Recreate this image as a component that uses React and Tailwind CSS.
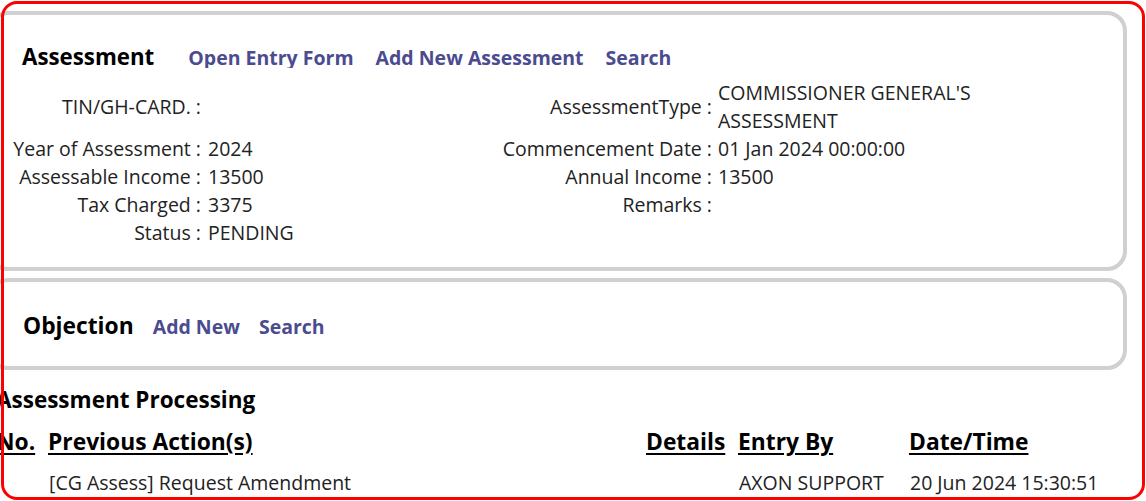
import React from 'react';

const LEFT_ROWS = [
  { label: 'TIN/GH-CARD. :', value: '' },
  { label: 'Year of Assessment :', value: '2024' },
  { label: 'Assessable Income :', value: '13500' },
  { label: 'Tax Charged :', value: '3375' },
  { label: 'Status :', value: 'PENDING' },
];

const RIGHT_ROWS = [
  { label: 'AssessmentType :', value: "COMMISSIONER GENERAL'S ASSESSMENT" },
  { label: 'Commencement Date :', value: '01 Jan 2024 00:00:00' },
  { label: 'Annual Income :', value: '13500' },
  { label: 'Remarks :', value: '' },
  { label: '', value: '' },
];

function NavLink({ clip, children }) {
  return (
    <span
      className={`block leading-[21px] text-[19.5px] font-bold text-[#4b4b8f] ${
        clip ? 'h-[21px] overflow-hidden' : ''
      }`}
    >
      {children}
    </span>
  );
}

function Box({ className, children }) {
  return (
    <section
      className={`w-[1139px] rounded-[20px] border-[4px] border-[#d0d0d0] bg-white ${className}`}
    >
      {children}
    </section>
  );
}

export default function App() {
  return (
    <div className="relative h-[501px] w-[1146px] overflow-hidden bg-white font-['Open_Sans',sans-serif] text-[19.5px] text-[#222]">
      <div className="-ml-[12px] pt-[11px]">
        {/* Assessment panel */}
        <Box className="h-[260px] pt-[30px]">
          <div className="flex items-center gap-[22px] pl-[30px]">
            <h2 className="mr-[12px] text-[22.3px] font-bold leading-[24px] text-black">
              Assessment
            </h2>
            <NavLink clip>Open Entry Form</NavLink>
            <NavLink>Add New Assessment</NavLink>
            <NavLink>Search</NavLink>
          </div>

          <div className="mt-[10px] grid grid-cols-[212px_250px_261px_300px] items-center leading-[28px]">
            {LEFT_ROWS.map((row, i) => (
              <React.Fragment key={i}>
                <div className="pr-[3px] text-right">{row.label}</div>
                <div className="pl-[4px]">{row.value}</div>
                <div className="pr-[3px] text-right">{RIGHT_ROWS[i].label}</div>
                <div className="pl-[3px]">{RIGHT_ROWS[i].value}</div>
              </React.Fragment>
            ))}
          </div>
        </Box>

        {/* Objection panel */}
        <Box className="mt-[7px] flex h-[92px] items-center gap-[19px] pl-[31px] pt-[4px]">
          <h2 className="text-[22.8px] font-bold leading-[24px] text-black">Objection</h2>
          <NavLink>Add New</NavLink>
          <NavLink>Search</NavLink>
        </Box>
      </div>

      {/* Processing history */}
      <div className="-ml-[4px] mt-[16px]">
        <h3 className="text-[22.5px] font-bold leading-[28px] text-black">
          Assessment Processing
        </h3>
        <div className="mt-[14px] grid grid-cols-[52px_598px_92px_171px_240px] text-[22.8px] font-bold leading-[28px] text-black underline underline-offset-[3px]">
          <div>No.</div>
          <div>Previous Action(s)</div>
          <div>Details</div>
          <div>Entry By</div>
          <div>Date/Time</div>
        </div>
        <div className="mt-[13px] grid grid-cols-[52px_598px_92px_171px_240px] leading-[28px]">
          <div></div>
          <div className="pl-[1px]">[CG Assess] Request Amendment</div>
          <div></div>
          <div className="pl-[1px]">AXON SUPPORT</div>
          <div className="pl-[1px]">20 Jun 2024 15:30:51</div>
        </div>
      </div>

      {/* red annotation frame */}
      <div className="pointer-events-none absolute inset-[1px] rounded-[16px] border-[3px] border-[#ff0000]" />
    </div>
  );
}
